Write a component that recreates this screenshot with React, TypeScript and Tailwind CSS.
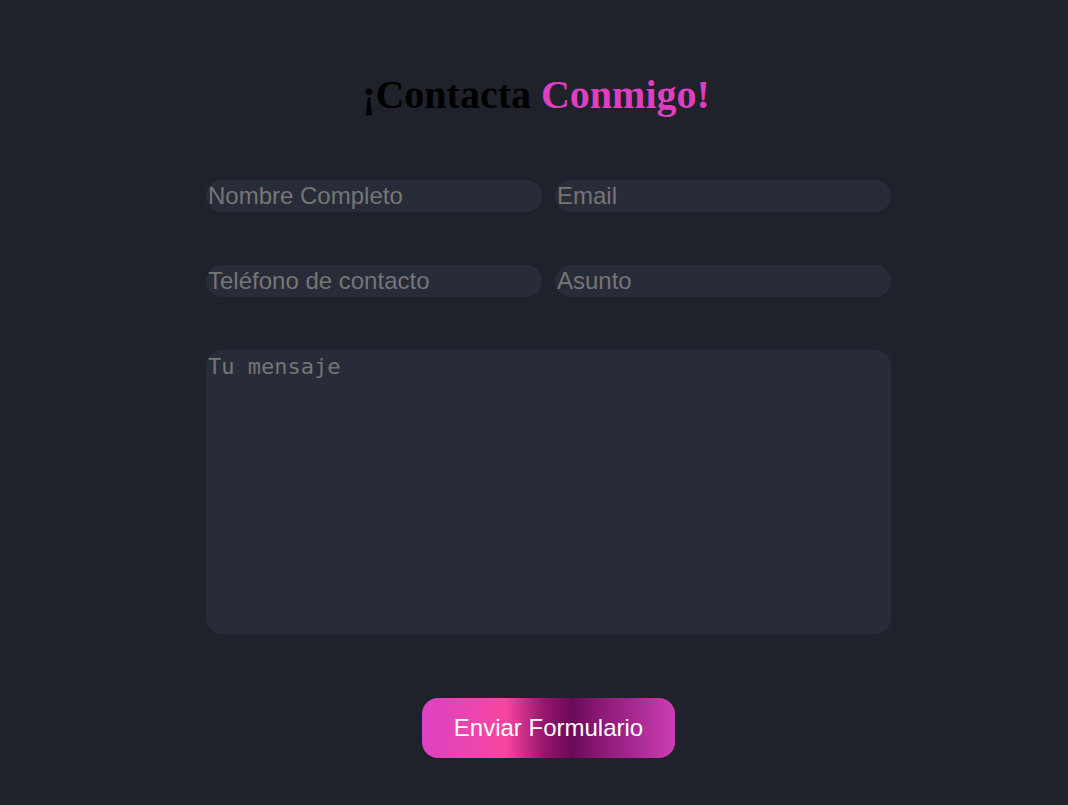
export default function App() {
  return (
    <div className="min-h-[805px] w-full bg-[#1f222a] flex flex-col items-center">
      <h1 className="mt-[72px] ml-[4px] h-[46px] text-[40px] leading-[46px] font-bold font-['Liberation_Serif',serif] text-black">
        ¡Contacta <span className="text-[#dd3fbf]">Conmigo!</span>
      </h1>

      <div className="pl-[29px]">
        <form className="mt-[62px] w-[685px] flex flex-col font-['Liberation_Sans',Arial,sans-serif]">
          <div className="grid grid-cols-2 gap-x-[13px] gap-y-[53px]">
            <input
              placeholder="Nombre Completo"
              className="h-[32px] rounded-2xl bg-[#282c38] px-[2px] text-[24px] text-[#d0d0d0] placeholder:text-[#757575] outline-none"
            />
            <input
              placeholder="Email"
              className="h-[32px] rounded-2xl bg-[#282c38] px-[2px] text-[24px] text-[#d0d0d0] placeholder:text-[#757575] outline-none"
            />
            <input
              placeholder="Teléfono de contacto"
              className="h-[32px] rounded-2xl bg-[#282c38] px-[2px] text-[24px] text-[#d0d0d0] placeholder:text-[#757575] outline-none"
            />
            <input
              placeholder="Asunto"
              className="h-[32px] rounded-2xl bg-[#282c38] px-[2px] text-[24px] text-[#d0d0d0] placeholder:text-[#757575] outline-none"
            />
          </div>

          <textarea
            placeholder="Tu mensaje"
            className="mt-[53px] h-[284px] resize-none rounded-2xl bg-[#282c38] px-[2px] pt-0 font-['DejaVu_Sans_Mono',monospace] text-[22px] text-[#d0d0d0] placeholder:text-[#757575] outline-none"
          />

          <div className="flex justify-center mt-[64px]">
            <button
              type="button"
              className="h-[60px] px-[32px] rounded-2xl text-[24px] text-white bg-[linear-gradient(90deg,#dc42c2_0%,#f746a2_33%,#98166e_48%,#6c0a58_59%,#8e1a78_72%,#cb3db2_100%)]"
            >
              Enviar Formulario
            </button>
          </div>
        </form>
      </div>
    </div>
  );
}
